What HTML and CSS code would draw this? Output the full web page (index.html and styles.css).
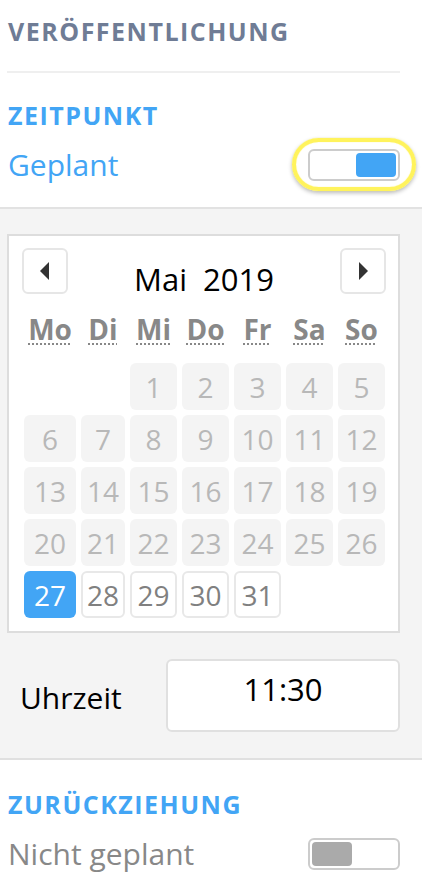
FILE: index.html
```html
<!DOCTYPE html>
<html lang="de">
<head>
<meta charset="utf-8">
<title>Veröffentlichung</title>
<link rel="stylesheet" href="styles.css">
</head>
<body>
<section class="top">
  <h1 class="title">VERÖFFENTLICHUNG</h1>
  <div class="divider"></div>
  <h2 class="subtitle">ZEITPUNKT</h2>
  <div class="switch-row">
    <span class="switch-label on">Geplant</span>
    <span class="switch is-on focused"><span class="knob"></span></span>
  </div>
</section>

<section class="schedule">
  <div class="calendar">
    <div class="cal-nav">
      <button class="nav-btn" type="button" aria-label="Vorheriger Monat">
        <svg width="10" height="18" viewBox="0 0 10 18"><path d="M9 0 L0 9 L9 18 Z" fill="#333"/></svg>
      </button>
      <div class="cal-title"><span>Mai</span><span>2019</span></div>
      <button class="nav-btn" type="button" aria-label="Nächster Monat">
        <svg width="10" height="18" viewBox="0 0 10 18"><path d="M1 0 L10 9 L1 18 Z" fill="#333"/></svg>
      </button>
    </div>
    <div class="cal-grid">
      <abbr class="wd" title="Montag">Mo</abbr>
      <abbr class="wd" title="Dienstag">Di</abbr>
      <abbr class="wd" title="Mittwoch">Mi</abbr>
      <abbr class="wd" title="Donnerstag">Do</abbr>
      <abbr class="wd" title="Freitag">Fr</abbr>
      <abbr class="wd" title="Samstag">Sa</abbr>
      <abbr class="wd" title="Sonntag">So</abbr>

      <span class="day empty"></span>
      <span class="day empty"></span>
      <span class="day off">1</span>
      <span class="day off">2</span>
      <span class="day off">3</span>
      <span class="day off">4</span>
      <span class="day off">5</span>

      <span class="day off">6</span>
      <span class="day off">7</span>
      <span class="day off">8</span>
      <span class="day off">9</span>
      <span class="day off">10</span>
      <span class="day off">11</span>
      <span class="day off">12</span>

      <span class="day off">13</span>
      <span class="day off">14</span>
      <span class="day off">15</span>
      <span class="day off">16</span>
      <span class="day off">17</span>
      <span class="day off">18</span>
      <span class="day off">19</span>

      <span class="day off">20</span>
      <span class="day off">21</span>
      <span class="day off">22</span>
      <span class="day off">23</span>
      <span class="day off">24</span>
      <span class="day off">25</span>
      <span class="day off">26</span>

      <span class="day selected">27</span>
      <span class="day">28</span>
      <span class="day">29</span>
      <span class="day">30</span>
      <span class="day">31</span>
    </div>
  </div>
  <div class="time-row">
    <span class="time-label">Uhrzeit</span>
    <div class="time-box">11:30</div>
  </div>
</section>

<section class="bottom">
  <h2 class="subtitle">ZURÜCKZIEHUNG</h2>
  <div class="switch-row">
    <span class="switch-label">Nicht geplant</span>
    <span class="switch"><span class="knob"></span></span>
  </div>
</section>
</body>
</html>
```

FILE: styles.css
```css
html, body {
  margin: 0;
  padding: 0;
  background: #ffffff;
}
body {
  font-family: "Open Sans", "Noto Sans", sans-serif;
  color: #000;
  width: 422px;
  overflow: hidden;
}

.top {
  padding: 15px 22px 22px 8px;
}
.title {
  margin: 0;
  font-size: 25px;
  line-height: 32px;
  font-weight: 700;
  letter-spacing: 1.5px;
  color: #6f7c95;
}
.divider {
  height: 2px;
  background: #efefef;
  margin: 24px 0 26px -1px;
}
.subtitle {
  margin: 0;
  font-size: 25px;
  line-height: 32px;
  font-weight: 700;
  letter-spacing: 1.5px;
  color: #42a5f5;
}
.switch-row {
  display: flex;
  align-items: center;
  justify-content: space-between;
  height: 40px;
  margin-top: 14px;
}
.switch-label {
  font-size: 30px;
  line-height: 40px;
  color: #888888;
}
.switch-label.on {
  color: #42a5f5;
}
.switch {
  position: relative;
  box-sizing: border-box;
  width: 92px;
  height: 32px;
  border: 2px solid #cccccc;
  border-radius: 6px;
  background: #fff;
  display: flex;
  align-items: center;
  padding: 0 2px;
}
.switch .knob {
  width: 40px;
  height: 24px;
  border-radius: 4px;
  background: #aaaaaa;
}
.switch.is-on {
  justify-content: flex-end;
}
.switch.is-on .knob {
  background: #42a5f5;
}
.switch.focused::before {
  content: "";
  position: absolute;
  top: -13px;
  bottom: -12px;
  left: -18px;
  right: -18px;
  border: 4px solid #fff35c;
  border-radius: 28px;
  box-shadow: 0 0 1px #fff35c, 0 2px 4px rgba(0, 0, 0, 0.28), inset 0 0 1px #fff35c;
  pointer-events: none;
}

.schedule {
  background: #f4f4f4;
  border-top: 2px solid #e2e2e2;
  border-bottom: 2px solid #e0e0e0;
  padding: 25px 0 26px 0;
}
.calendar {
  box-sizing: border-box;
  width: 393px;
  margin-left: 7px;
  background: #fff;
  border: 2px solid #dddddd;
  padding: 12px 12px 13px 15px;
}
.cal-nav {
  display: flex;
  justify-content: space-between;
  align-items: flex-start;
  height: 46px;
  margin-left: -2px;
}
.nav-btn {
  box-sizing: border-box;
  width: 46px;
  height: 46px;
  padding: 0;
  margin: 0;
  border: 2px solid #e6e6e6;
  border-radius: 6px;
  background: #fff;
  display: flex;
  align-items: center;
  justify-content: center;
}
.cal-title {
  display: flex;
  gap: 16px;
  font-size: 31px;
  line-height: 36px;
  padding-top: 13px;
  color: #000;
}
.cal-grid {
  display: grid;
  grid-template-columns: 52px 44px 47px 47px 47px 47px 47px;
  grid-template-rows: 64px;
  grid-auto-rows: 47px;
  column-gap: 5px;
  row-gap: 5px;
}
.wd {
  font-size: 28px;
  line-height: 36px;
  font-weight: 700;
  color: #888888;
  text-align: center;
  text-decoration: underline dotted #888888;
  text-decoration-thickness: 2px;
  text-underline-offset: 3px;
  margin-top: 17px;
  align-self: start;
  justify-self: center;
}
.day {
  box-sizing: border-box;
  display: flex;
  align-items: center;
  justify-content: center;
  font-size: 28px;
  color: #808080;
  border: 2px solid #e8e8e8;
  border-radius: 6px;
  background: #fff;
}
.day.empty {
  border: none;
  background: transparent;
}
.day.off {
  border: none;
  background: #f4f4f4;
  color: #b8b8b8;
}
.day.selected {
  border: none;
  background: #42a5f5;
  color: #ffffff;
}

.time-row {
  display: flex;
  align-items: flex-start;
  margin-top: 26px;
  padding: 0 22px 0 20px;
}
.time-label {
  width: 146px;
  font-size: 30px;
  line-height: 40px;
  margin-top: 19px;
}
.time-box {
  box-sizing: border-box;
  width: 234px;
  height: 73px;
  border: 2px solid #e0e0e0;
  border-radius: 6px;
  background: #fff;
  text-align: center;
  font-size: 31px;
  line-height: 42px;
  padding-top: 7px;
  color: #000;
}

.bottom {
  padding: 28px 22px 0 8px;
}
.bottom .switch-row {
  margin-top: 14px;
}
```
